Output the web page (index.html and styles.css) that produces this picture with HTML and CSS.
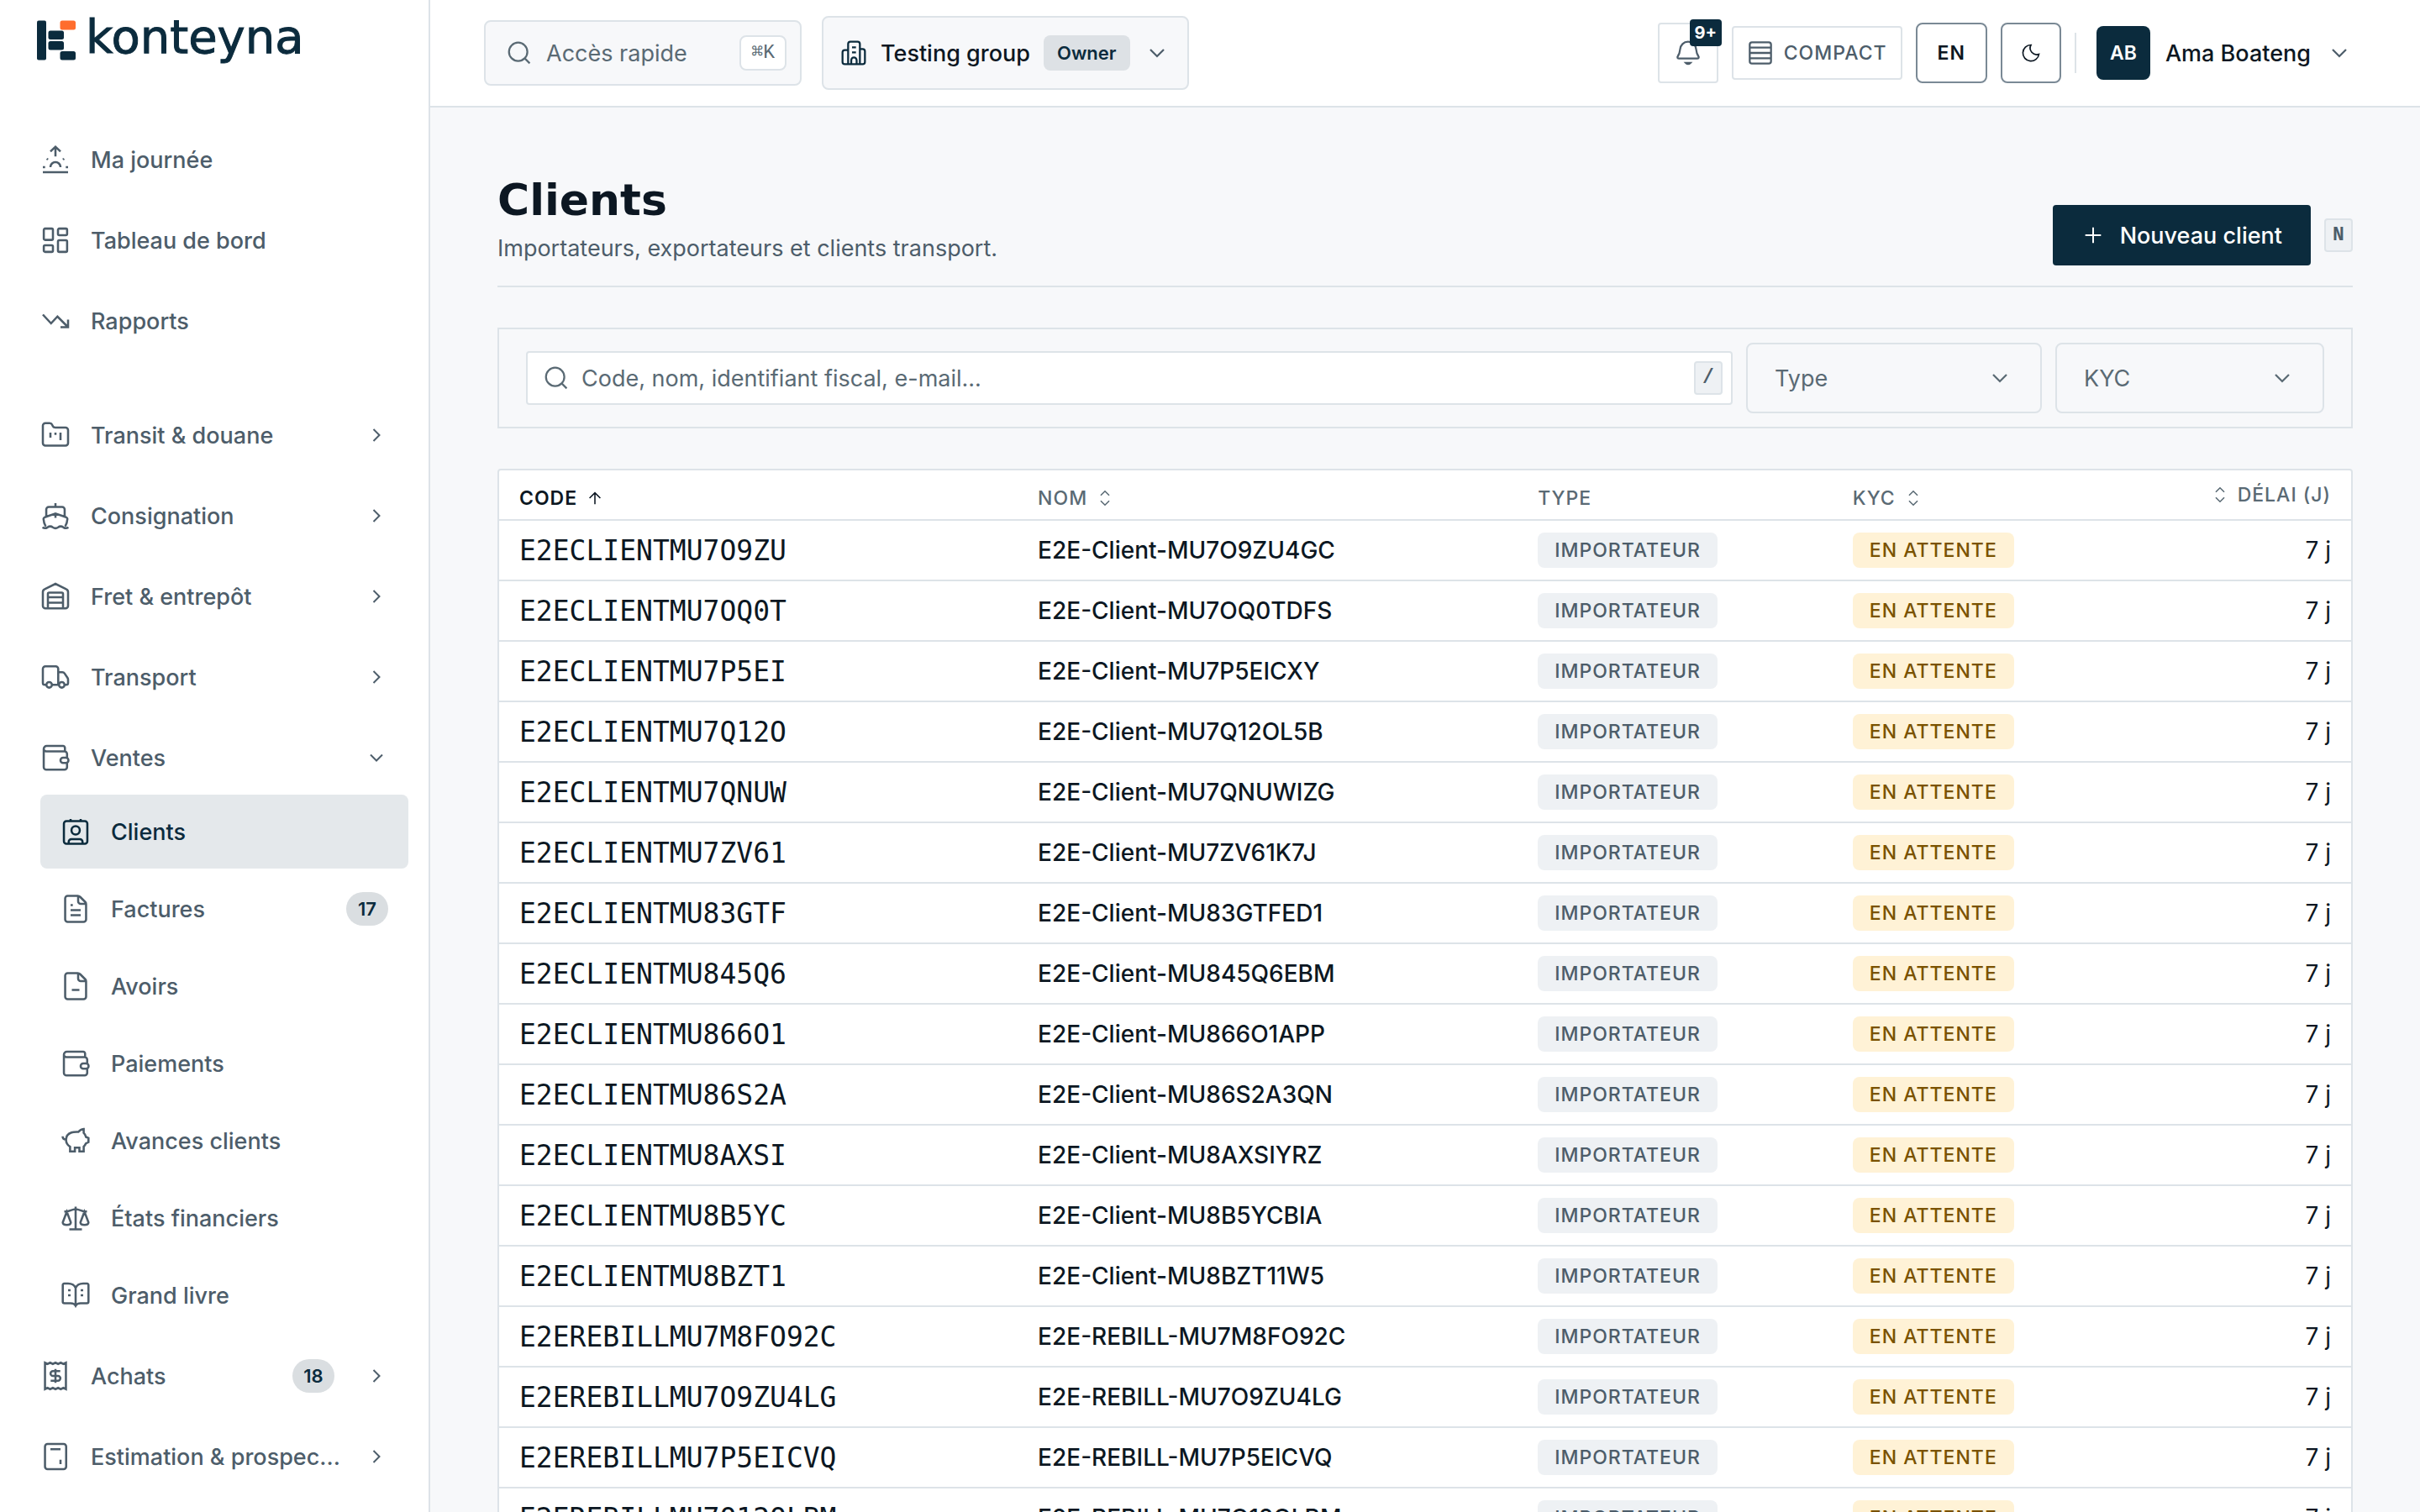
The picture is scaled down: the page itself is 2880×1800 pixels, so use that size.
FILE: index.html
```html
<!DOCTYPE html>
<html lang="fr">

<head>
    <meta charset="UTF-8">
    <meta name="viewport" content="width=device-width, initial-scale=1.0">
    <title>Clients - konteyna</title>
    <link rel="stylesheet" href="styles.css">
</head>

<body>
    <!-- icon sprite -->
    <svg class="sprite" aria-hidden="true">
        <symbol id="i-sunrise" viewBox="0 0 24 24"><path d="M12 9.5V2M8 5.6L12 1.8l4 3.8M8 18a4 4 0 0 1 8 0M2 22h20M2 18h1.8M20.2 18H22M5.2 11.2l.8.8M18.8 11.2l-.8.8"/></symbol>
        <symbol id="i-dashboard" viewBox="0 0 24 24"><rect x="2.75" y="2.75" width="7.25" height="9" rx="1"/><rect x="14" y="2.75" width="7.25" height="5.25" rx="1"/><rect x="2.75" y="16" width="7.25" height="5.25" rx="1"/><rect x="14" y="12" width="7.25" height="9.25" rx="1"/></symbol>
        <symbol id="i-trend" viewBox="0 0 24 24"><path d="M2 7l6.5 7 5.1-5.5L22 17M22 11v6h-6"/></symbol>
        <symbol id="i-folder" viewBox="0 0 24 24"><path d="M2 4.5a2 2 0 0 1 2-2h3.4c1 0 1.6.4 2 1.3l.5 1c.4.8 1 1.2 2 1.2H20a2 2 0 0 1 2 2v10.3a2 2 0 0 1-2 2H4a2 2 0 0 1-2-2zM8 10v4M12 10v1.8M16 10v6"/></symbol>
        <symbol id="i-ship" viewBox="0 0 24 24"><path d="M12 2v3M4.7 12V7a2 2 0 0 1 2-2h10.6a2 2 0 0 1 2 2v5M12 10.2v3.5M4.3 20.5c-1.1-2-1.7-4-1.8-6 0-.7.3-1 1-1.3L12 10.2l8.5 3c.7.3 1 .6 1 1.3-.1 2-.7 4-1.8 6M1.7 21.2c1.2.8 2.7.8 4 0 1.3-.9 3-.9 4.2 0 1.3.9 2.9.9 4.2 0 1.2-.9 2.9-.9 4.2 0 1.3.8 2.8.8 4 0"/></symbol>
        <symbol id="i-warehouse" viewBox="0 0 24 24"><path d="M2 8.5c0-1.2.4-1.8 1.5-2.3L12 2l8.5 4.2c1.1.5 1.5 1.1 1.5 2.3v11a2 2 0 0 1-2 2H4a2 2 0 0 1-2-2zM6 21.5V10a1 1 0 0 1 1-1h10a1 1 0 0 1 1 1v11.5M6 12.7h12M6 17h12"/></symbol>
        <symbol id="i-truck" viewBox="0 0 24 24"><path d="M4.8 18.2H3.5A1.5 1.5 0 0 1 2 16.7V5.5a2 2 0 0 1 2-2h8.2a2 2 0 0 1 2 2v12.7M9.2 18.2h5.6M14.2 8.2h3.3c.8 0 1.3.3 1.7.9l2.3 3.4c.3.5.5.9.5 1.5v2.7a1.5 1.5 0 0 1-1.5 1.5h-1.3"/><circle cx="7" cy="18.2" r="2.2"/><circle cx="17" cy="18.2" r="2.2"/></symbol>
        <symbol id="i-wallet" viewBox="0 0 24 24"><path d="M2.7 5v14.5a2 2 0 0 0 2 2h14.5a2 2 0 0 0 2-2V16.2M21.2 12V9a2 2 0 0 0-2-2H4.7a2 2 0 0 1-2-2 2.3 2.3 0 0 1 2.3-2.3h13a1.5 1.5 0 0 1 1.5 1.5V7"/><rect x="16" y="12" width="6.3" height="4.2" rx="2"/></symbol>
        <symbol id="i-contact" viewBox="0 0 24 24"><rect x="2.7" y="3.7" width="18.6" height="18" rx="2"/><path d="M8 2v1.7M16 2v1.7M6.5 21.5v-1.3a2.2 2.2 0 0 1 2.2-2.2h6.6a2.2 2.2 0 0 1 2.2 2.2v1.3"/><circle cx="12" cy="11" r="3.3"/></symbol>
        <symbol id="i-file" viewBox="0 0 24 24"><path d="M3.7 3.7a2 2 0 0 1 2-2h8c.8 0 1.3.2 1.9.8l4 4c.5.5.7 1 .7 1.8v12a2 2 0 0 1-2 2H5.7a2 2 0 0 1-2-2zM14 2v4a2 2 0 0 0 2 2h4.3M8 9h1.8M8 13h8M8 17h8"/></symbol>
        <symbol id="i-file-minus" viewBox="0 0 24 24"><path d="M3.7 3.7a2 2 0 0 1 2-2h8c.8 0 1.3.2 1.9.8l4 4c.5.5.7 1 .7 1.8v12a2 2 0 0 1-2 2H5.7a2 2 0 0 1-2-2zM14 2v4a2 2 0 0 0 2 2h4.3M9 15h6"/></symbol>
        <symbol id="i-pig" viewBox="0 0 24 24"><path d="M1.7 8.5c0 1.5.8 2.5 2.7 2.7M8.7 5.5C10 5 12 4.9 14.2 5c1-1.3 2.4-2.1 4.2-2.3v3.1c.8.8 1.4 1.9 1.8 3.2l2 .9v3.3l-2 .9c-.5 1-1 1.9-1.8 2.6v3.8H15V17.5h-3.6v3H7.6v-3.7C5.5 15.5 4.4 13.3 4.4 11.2c0-2.5 1.8-4.8 4.3-5.7z"/></symbol>
        <symbol id="i-scale" viewBox="0 0 24 24"><path d="M12 3v18M7 21h10M3 6.8h2c2.5 0 4-1.8 7-1.8s4.5 1.8 7 1.8h2M5 7l-3.2 8.5c0 1.3 1.4 2 3.2 2s3.2-.7 3.2-2zM19 7l-3.2 8.5c0 1.3 1.4 2 3.2 2s3.2-.7 3.2-2z"/></symbol>
        <symbol id="i-book" viewBox="0 0 24 24"><path d="M12 6.2C11 3.8 8.7 2.7 6 2.7H3A1.2 1.2 0 0 0 1.8 4v13a1.3 1.3 0 0 0 1.3 1.3h5c2 0 3.2.6 3.9 2 .7-1.4 1.9-2 3.9-2h5a1.3 1.3 0 0 0 1.3-1.3V4A1.2 1.2 0 0 0 21 2.7h-3c-2.7 0-5 1.1-6 3.5zM12 6.2v14.3M6 8h2M6 12h2M16 8h2M16 12h2"/></symbol>
        <symbol id="i-receipt" viewBox="0 0 24 24"><path d="M3.7 1.5v21l2-1 2.1 1 2.1-1 2.1 1 2.1-1 2.1 1 2.1-1 2 1v-21l-2 1-2.1-1-2.1 1-2.1-1-2.1 1-2.1-1-2.1 1zM15.8 8.2H10a1.9 1.9 0 0 0 0 3.8h4a1.9 1.9 0 0 1 0 3.8H8.2M12 6.5v11"/></symbol>
        <symbol id="i-calculator" viewBox="0 0 24 24"><rect x="3.7" y="2" width="16.8" height="20" rx="2"/><path d="M8 6.2h8M16 14.5v3.5"/></symbol>
        <symbol id="i-right" viewBox="0 0 24 24"><path d="M9 6l6 6-6 6"/></symbol>
        <symbol id="i-down" viewBox="0 0 24 24"><path d="M6 9l6 6 6-6"/></symbol>
        <symbol id="i-search" viewBox="0 0 24 24"><circle cx="11" cy="11" r="8.2"/><path d="M17 17l4.3 4.3"/></symbol>
        <symbol id="i-building" viewBox="0 0 24 24"><path d="M7 22V4a2 2 0 0 1 2-2h6.5a2 2 0 0 1 2 2v18M7 9.5H4a2 2 0 0 0-2 2V20a2 2 0 0 0 2 2h16a2 2 0 0 0 2-2v-9.5a2 2 0 0 0-2-2h-2.500M10.500 7H14M10.500 11.500H14M9.800 22v-3.500a2.400 2.400 0 0 1 4.800 0V22"/></symbol>
        <symbol id="i-bell" viewBox="0 0 24 24"><path d="M4 17c-1.400 0-1.900-1-1.200-2C4 13.200 4.600 11.500 4.800 9 5.100 5 8 2 12 2s6.900 3 7.200 7c.2 2.500.8 4.200 2 6 .7 1 .2 2-1.200 2zM10 21c1.200 1.200 2.800 1.200 4 0z"/></symbol>
        <symbol id="i-rows" viewBox="0 0 24 24"><rect x="2.500" y="2.500" width="19" height="19" rx="2"/><path d="M2.500 7.200h19M2.500 12h19M2.500 16.800h19"/></symbol>
        <symbol id="i-moon" viewBox="0 0 24 24"><path d="M21.500 13.500A7.800 7.800 0 0 1 12 2.500 9.600 9.600 0 1 0 21.500 13.500z"/></symbol>
        <symbol id="i-plus" viewBox="0 0 24 24"><path d="M12 4v16M4 12h16"/></symbol>
        <symbol id="i-arrow-up" viewBox="0 0 24 24"><path d="M12 20V5M5 12l7-7 7 7"/></symbol>
        <symbol id="i-sort" viewBox="0 0 24 24"><path d="M6.500 8.500L12 3l5.500 5.500M6.500 15.500L12 21l5.500-5.500"/></symbol>
    </svg>

    <div class="app">
        <aside class="sidebar">
            <a class="logo" href="#">
                <svg class="logo-mark" viewBox="0 0 46 48" aria-hidden="true">
                    <rect x="0" y="0.500" width="11" height="47" rx="2" fill="#0b2b3d"/>
                    <rect x="27.500" y="0.500" width="18.500" height="11" rx="2.500" fill="#ff6d2d"/>
                    <rect x="13.500" y="12.500" width="18.500" height="10.500" rx="2.500" fill="#0b2b3d"/>
                    <rect x="13.500" y="25" width="18.500" height="10.500" rx="2.500" fill="#0b2b3d"/>
                    <rect x="27.500" y="37" width="18.500" height="10.500" rx="2.500" fill="#0b2b3d"/>
                </svg>
                <span class="logo-text">konteyna</span>
            </a>

            <nav class="nav">
                <a class="nav-item" href="#"><svg class="icon"><use href="#i-sunrise"/></svg><span class="nav-label">Ma journée</span></a>
                <a class="nav-item" href="#"><svg class="icon"><use href="#i-dashboard"/></svg><span class="nav-label">Tableau de bord</span></a>
                <a class="nav-item" href="#"><svg class="icon"><use href="#i-trend"/></svg><span class="nav-label">Rapports</span></a>

                <div class="nav-group">
                    <button type="button" class="nav-item"><svg class="icon"><use href="#i-folder"/></svg><span class="nav-label">Transit &amp; douane</span><svg class="icon chevron"><use href="#i-right"/></svg></button>
                    <button type="button" class="nav-item"><svg class="icon"><use href="#i-ship"/></svg><span class="nav-label">Consignation</span><svg class="icon chevron"><use href="#i-right"/></svg></button>
                    <button type="button" class="nav-item"><svg class="icon"><use href="#i-warehouse"/></svg><span class="nav-label">Fret &amp; entrepôt</span><svg class="icon chevron"><use href="#i-right"/></svg></button>
                    <button type="button" class="nav-item"><svg class="icon"><use href="#i-truck"/></svg><span class="nav-label">Transport</span><svg class="icon chevron"><use href="#i-right"/></svg></button>
                    <div>
                        <button type="button" class="nav-item" aria-expanded="true"><svg class="icon"><use href="#i-wallet"/></svg><span class="nav-label">Ventes</span><svg class="icon chevron"><use href="#i-down"/></svg></button>
                        <div class="subnav">
                            <a class="nav-item active" href="#"><svg class="icon"><use href="#i-contact"/></svg><span class="nav-label">Clients</span></a>
                            <a class="nav-item" href="#"><svg class="icon"><use href="#i-file"/></svg><span class="nav-label">Factures</span><span class="count">17</span></a>
                            <a class="nav-item" href="#"><svg class="icon"><use href="#i-file-minus"/></svg><span class="nav-label">Avoirs</span></a>
                            <a class="nav-item" href="#"><svg class="icon"><use href="#i-wallet"/></svg><span class="nav-label">Paiements</span></a>
                            <a class="nav-item" href="#"><svg class="icon"><use href="#i-pig"/></svg><span class="nav-label">Avances clients</span></a>
                            <a class="nav-item" href="#"><svg class="icon"><use href="#i-scale"/></svg><span class="nav-label">États financiers</span></a>
                            <a class="nav-item" href="#"><svg class="icon"><use href="#i-book"/></svg><span class="nav-label">Grand livre</span></a>
                        </div>
                    </div>
                    <button type="button" class="nav-item"><svg class="icon"><use href="#i-receipt"/></svg><span class="nav-label">Achats</span><span class="count">18</span><svg class="icon chevron"><use href="#i-right"/></svg></button>
                    <button type="button" class="nav-item"><svg class="icon"><use href="#i-calculator"/></svg><span class="nav-label">Estimation &amp; prospec...</span><svg class="icon chevron"><use href="#i-right"/></svg></button>
                </div>
            </nav>
        </aside>

        <div class="page">
            <header class="topbar">
                <button type="button" class="quick">
                    <svg class="icon"><use href="#i-search"/></svg>
                    <span class="quick-label">Accès rapide</span>
                    <kbd class="quick-kbd">⌘K</kbd>
                </button>
                <button type="button" class="group">
                    <svg class="icon"><use href="#i-building"/></svg>
                    <span>Testing group</span>
                    <span class="role">Owner</span>
                    <svg class="icon"><use href="#i-down"/></svg>
                </button>

                <div class="tools">
                    <button type="button" class="tool bell" aria-label="Notifications">
                        <svg class="icon"><use href="#i-bell"/></svg>
                        <span class="bell-count">9+</span>
                    </button>
                    <button type="button" class="tool compact"><svg class="icon"><use href="#i-rows"/></svg>COMPACT</button>
                    <button type="button" class="tool lang">EN</button>
                    <button type="button" class="tool theme" aria-label="Thème"><svg class="icon"><use href="#i-moon"/></svg></button>
                    <span class="divider"></span>
                    <button type="button" class="user">
                        <span class="avatar">AB</span>
                        <span>Ama Boateng</span>
                        <svg class="icon"><use href="#i-down"/></svg>
                    </button>
                </div>
            </header>

            <main class="content">
                <div class="page-head">
                    <div>
                        <h1>Clients</h1>
                        <p>Importateurs, exportateurs et clients transport.</p>
                    </div>
                    <div class="actions">
                        <button type="button" class="primary"><svg class="icon"><use href="#i-plus"/></svg>Nouveau client</button>
                        <kbd class="key">N</kbd>
                    </div>
                </div>

                <form class="filters">
                    <div class="search">
                        <svg class="icon"><use href="#i-search"/></svg>
                        <input type="text" aria-label="Rechercher" placeholder="Code, nom, identifiant fiscal, e-mail...">
                        <kbd class="key">/</kbd>
                    </div>
                    <div class="select type">
                        <select aria-label="Type"><option>Type</option></select>
                        <svg class="icon"><use href="#i-down"/></svg>
                    </div>
                    <div class="select kyc">
                        <select aria-label="KYC"><option>KYC</option></select>
                        <svg class="icon"><use href="#i-down"/></svg>
                    </div>
                </form>

                <div class="table-box">
                    <table>
                        <thead>
                            <tr>
                                <th class="col-code"><button type="button" class="sort sorted">CODE<svg class="icon"><use href="#i-arrow-up"/></svg></button></th>
                                <th class="col-name"><button type="button" class="sort">NOM<svg class="icon"><use href="#i-sort"/></svg></button></th>
                                <th class="col-type"><span class="sort">TYPE</span></th>
                                <th class="col-kyc"><button type="button" class="sort">KYC<svg class="icon"><use href="#i-sort"/></svg></button></th>
                                <th class="col-delay"><button type="button" class="sort"><svg class="icon"><use href="#i-sort"/></svg>DÉLAI (J)</button></th>
                            </tr>
                        </thead>
                        <tbody>
                            <tr><td class="code">E2ECLIENTMU7O9ZU</td><td>E2E-Client-MU7O9ZU4GC</td><td><span class="tag">IMPORTATEUR</span></td><td><span class="tag pending">EN ATTENTE</span></td><td class="delay">7 j</td></tr>
                            <tr><td class="code">E2ECLIENTMU7OQ0T</td><td>E2E-Client-MU7OQ0TDFS</td><td><span class="tag">IMPORTATEUR</span></td><td><span class="tag pending">EN ATTENTE</span></td><td class="delay">7 j</td></tr>
                            <tr><td class="code">E2ECLIENTMU7P5EI</td><td>E2E-Client-MU7P5EICXY</td><td><span class="tag">IMPORTATEUR</span></td><td><span class="tag pending">EN ATTENTE</span></td><td class="delay">7 j</td></tr>
                            <tr><td class="code">E2ECLIENTMU7Q12O</td><td>E2E-Client-MU7Q12OL5B</td><td><span class="tag">IMPORTATEUR</span></td><td><span class="tag pending">EN ATTENTE</span></td><td class="delay">7 j</td></tr>
                            <tr><td class="code">E2ECLIENTMU7QNUW</td><td>E2E-Client-MU7QNUWIZG</td><td><span class="tag">IMPORTATEUR</span></td><td><span class="tag pending">EN ATTENTE</span></td><td class="delay">7 j</td></tr>
                            <tr><td class="code">E2ECLIENTMU7ZV61</td><td>E2E-Client-MU7ZV61K7J</td><td><span class="tag">IMPORTATEUR</span></td><td><span class="tag pending">EN ATTENTE</span></td><td class="delay">7 j</td></tr>
                            <tr><td class="code">E2ECLIENTMU83GTF</td><td>E2E-Client-MU83GTFED1</td><td><span class="tag">IMPORTATEUR</span></td><td><span class="tag pending">EN ATTENTE</span></td><td class="delay">7 j</td></tr>
                            <tr><td class="code">E2ECLIENTMU845Q6</td><td>E2E-Client-MU845Q6EBM</td><td><span class="tag">IMPORTATEUR</span></td><td><span class="tag pending">EN ATTENTE</span></td><td class="delay">7 j</td></tr>
                            <tr><td class="code">E2ECLIENTMU866O1</td><td>E2E-Client-MU866O1APP</td><td><span class="tag">IMPORTATEUR</span></td><td><span class="tag pending">EN ATTENTE</span></td><td class="delay">7 j</td></tr>
                            <tr><td class="code">E2ECLIENTMU86S2A</td><td>E2E-Client-MU86S2A3QN</td><td><span class="tag">IMPORTATEUR</span></td><td><span class="tag pending">EN ATTENTE</span></td><td class="delay">7 j</td></tr>
                            <tr><td class="code">E2ECLIENTMU8AXSI</td><td>E2E-Client-MU8AXSIYRZ</td><td><span class="tag">IMPORTATEUR</span></td><td><span class="tag pending">EN ATTENTE</span></td><td class="delay">7 j</td></tr>
                            <tr><td class="code">E2ECLIENTMU8B5YC</td><td>E2E-Client-MU8B5YCBIA</td><td><span class="tag">IMPORTATEUR</span></td><td><span class="tag pending">EN ATTENTE</span></td><td class="delay">7 j</td></tr>
                            <tr><td class="code">E2ECLIENTMU8BZT1</td><td>E2E-Client-MU8BZT11W5</td><td><span class="tag">IMPORTATEUR</span></td><td><span class="tag pending">EN ATTENTE</span></td><td class="delay">7 j</td></tr>
                            <tr><td class="code">E2EREBILLMU7M8FO92C</td><td>E2E-REBILL-MU7M8FO92C</td><td><span class="tag">IMPORTATEUR</span></td><td><span class="tag pending">EN ATTENTE</span></td><td class="delay">7 j</td></tr>
                            <tr><td class="code">E2EREBILLMU7O9ZU4LG</td><td>E2E-REBILL-MU7O9ZU4LG</td><td><span class="tag">IMPORTATEUR</span></td><td><span class="tag pending">EN ATTENTE</span></td><td class="delay">7 j</td></tr>
                            <tr><td class="code">E2EREBILLMU7P5EICVQ</td><td>E2E-REBILL-MU7P5EICVQ</td><td><span class="tag">IMPORTATEUR</span></td><td><span class="tag pending">EN ATTENTE</span></td><td class="delay">7 j</td></tr>
                            <tr><td class="code">E2EREBILLMU7Q12OLBM</td><td>E2E-REBILL-MU7Q12OLBM</td><td><span class="tag">IMPORTATEUR</span></td><td><span class="tag pending">EN ATTENTE</span></td><td class="delay">7 j</td></tr>
                        </tbody>
                    </table>
                </div>
            </main>
        </div>
    </div>
</body>

</html>
```
FILE: styles.css
```css
* {
    margin: 0;
    padding: 0;
    box-sizing: border-box;
}

body {
    font-family: Inter, "Liberation Sans", sans-serif;
    font-size: 27px;
    color: #0c1722;
    background-color: #f7f8fa;
}

button,
input,
select {
    font: inherit;
    color: inherit;
    background: none;
    border: none;
}

a {
    color: inherit;
    text-decoration: none;
}

.sprite {
    display: none;
}

.icon {
    width: 32px;
    height: 32px;
    flex: none;
    fill: none;
    stroke: currentColor;
    stroke-width: 1.7;
}

.app {
    display: flex;
    height: 100vh;
    overflow: hidden;
}

/* sidebar */
.sidebar {
    width: 512px;
    flex: none;
    background-color: #fff;
    border-right: 2px solid #dde3e8;
    overflow: hidden;
}

.logo {
    display: flex;
    align-items: center;
    gap: 12px;
    height: 96px;
    padding-left: 44px;
}

.logo-mark {
    width: 46px;
    height: 48px;
}

.logo-text {
    font-family: "DejaVu Sans", sans-serif;
    font-size: 56px;
    line-height: 60px;
    padding-bottom: 8px;
    color: #0b2b3d;
    -webkit-text-stroke: 1px #0b2b3d;
}

.nav {
    display: flex;
    flex-direction: column;
    gap: 8px;
    padding: 50px 24px 0 24px;
}

.nav-group {
    display: flex;
    flex-direction: column;
    gap: 8px;
    margin-top: 40px;
}

.nav-item {
    display: flex;
    align-items: center;
    gap: 24px;
    width: 100%;
    height: 88px;
    padding: 0 24px;
    font-weight: 500;
    color: #4d5d6a;
    text-align: left;
    border-radius: 8px;
}

.nav-item .icon {
    width: 36px;
    height: 36px;
}

.nav-item .chevron {
    width: 28px;
    height: 28px;
}

.nav-label {
    flex: 1;
    white-space: nowrap;
}

.subnav {
    display: flex;
    flex-direction: column;
    gap: 4px;
    padding-left: 24px;
}

.nav-item.active {
    color: #0b2b3d;
    background-color: #e4e8eb;
}

.count {
    min-width: 50px;
    padding: 0 12px;
    font-size: 22px;
    font-weight: 600;
    line-height: 40px;
    text-align: center;
    color: #0b2b3d;
    background-color: #dadee1;
    border-radius: 20px;
}

.count + .chevron {
    margin-left: 12px;
}

/* topbar */
.page {
    flex: 1;
    min-width: 0;
}

.topbar {
    display: flex;
    align-items: center;
    gap: 24px;
    height: 128px;
    padding: 0 80px 0 64px;
    background-color: #fff;
    border-bottom: 2px solid #dde3e8;
}

.quick {
    display: flex;
    align-items: center;
    gap: 16px;
    width: 378px;
    height: 78px;
    padding: 0 16px 0 24px;
    color: #5a6a74;
    background-color: #f7f8fa;
    border: 2px solid #dde3e8;
    border-radius: 8px;
}

.quick-label {
    flex: 1;
    text-align: left;
}

kbd {
    font-family: "Liberation Mono", monospace;
}

.quick-kbd {
    padding: 0 12px;
    font-size: 23px;
    line-height: 38px;
    background-color: #fff;
    border: 2px solid #dde3e8;
    border-radius: 8px;
}

.group {
    display: flex;
    align-items: center;
    gap: 16px;
    height: 88px;
    padding: 0 20px;
    font-weight: 500;
    background-color: #f7f8fa;
    border: 2px solid #dde3e8;
    border-radius: 8px;
}

.role {
    padding: 0 16px;
    font-size: 22px;
    font-weight: 600;
    line-height: 42px;
    color: #0b2b3d;
    background-color: #dde1e5;
    border-radius: 8px;
}

.group .icon:first-child {
    color: #0b2b3d;
}

.group .icon:last-child,
.user .icon {
    color: #4d5d6a;
}

.tools {
    display: flex;
    align-items: center;
    gap: 16px;
    margin-left: auto;
}

.tool {
    display: flex;
    align-items: center;
    justify-content: center;
    height: 72px;
    border: 2px solid #7a8995;
    border-radius: 8px;
}

.bell,
.theme {
    width: 72px;
}

.bell,
.compact {
    color: #4d5d6a;
    border-color: #dde3e8;
    border-radius: 4px;
}

.bell {
    position: relative;
}

.bell-count {
    position: absolute;
    top: -6px;
    right: -6px;
    min-width: 38px;
    font-size: 20px;
    font-weight: 700;
    line-height: 32px;
    color: #fff;
    background-color: #0b2b3d;
    border-radius: 4px;
}

.compact {
    gap: 12px;
    height: 64px;
    padding: 0 16px;
    font-size: 23px;
    font-weight: 500;
    letter-spacing: 1px;
}

.lang {
    padding: 0 24px;
    font-size: 23px;
    font-weight: 600;
    letter-spacing: 1px;
}

.theme .icon {
    width: 24px;
    height: 24px;
}

.divider {
    width: 2px;
    height: 48px;
    background-color: #dde3e8;
}

.user {
    display: flex;
    align-items: center;
    gap: 18px;
    padding-left: 8px;
    font-weight: 500;
}

.avatar {
    width: 64px;
    font-size: 23px;
    font-weight: 600;
    line-height: 64px;
    color: #fff;
    background-color: #0b2b3d;
    border-radius: 8px;
}

/* content */
.content {
    padding: 80px;
}

.page-head {
    display: flex;
    justify-content: space-between;
    align-items: flex-end;
    padding-bottom: 24px;
    border-bottom: 2px solid #dde3e8;
}

h1 {
    font-family: "DejaVu Sans", sans-serif;
    font-size: 52px;
    font-weight: 700;
    line-height: 60px;
}

.page-head p {
    margin-top: 8px;
    line-height: 40px;
    color: #4d5d6a;
}

.actions {
    display: flex;
    align-items: center;
    gap: 16px;
}

.primary {
    display: flex;
    align-items: center;
    gap: 18px;
    height: 72px;
    padding: 0 34px;
    font-weight: 500;
    color: #fff;
    background-color: #0b2b3d;
    border-radius: 4px;
}

.primary .icon {
    width: 28px;
    height: 28px;
}

.key {
    min-width: 34px;
    font-size: 23px;
    font-weight: 700;
    line-height: 36px;
    text-align: center;
    color: #4d5d6a;
    background-color: #eef1f4;
    border: 2px solid #dde3e8;
    border-radius: 4px;
}

.filters {
    display: flex;
    align-items: center;
    gap: 16px;
    margin: 48px 0;
    padding: 16px 32px;
    border: 2px solid #dde3e8;
}

.search {
    display: flex;
    flex: 1;
    align-items: center;
    gap: 14px;
    height: 64px;
    padding: 0 10px 0 18px;
    color: #5a6a74;
    background-color: #fff;
    border: 2px solid #dde3e8;
    border-radius: 4px;
}

.search input {
    flex: 1;
    outline: none;
}

.search input::placeholder {
    color: #5a6a74;
    opacity: 1;
}

.select {
    display: grid;
    align-items: center;
    color: #5a6a74;
}

.select select {
    grid-area: 1 / 1;
    height: 84px;
    padding: 0 32px;
    border: 2px solid #dde3e8;
    border-radius: 8px;
    appearance: none;
}

.select .icon {
    grid-area: 1 / 1;
    justify-self: end;
    margin-right: 34px;
    pointer-events: none;
}

.type {
    width: 352px;
}

.kyc {
    width: 320px;
}

/* table */
.table-box {
    background-color: #fff;
    border: 2px solid #dde3e8;
    border-radius: 4px;
}

table {
    width: 100%;
    table-layout: fixed;
    border-collapse: separate;
    border-spacing: 0;
}

th,
td {
    padding: 0 24px;
    text-align: left;
    border-bottom: 2px solid #dde3e8;
}

th {
    height: 60px;
    padding-top: 4px;
}

td {
    height: 72px;
    font-size: 28px;
    font-weight: 500;
}

.col-code {
    width: 28%;
}

.col-name {
    width: 27%;
}

.col-type {
    width: 17%;
}

.col-kyc {
    width: 14%;
}

.col-delay {
    padding-top: 0;
    padding-bottom: 4px;
    text-align: right;
}

.sort {
    display: inline-flex;
    align-items: center;
    gap: 10px;
    font-size: 23px;
    font-weight: 500;
    letter-spacing: 1px;
    vertical-align: middle;
    color: #5a6a74;
}

.sort .icon {
    width: 22px;
    height: 22px;
}

.sort.sorted {
    font-weight: 600;
    color: #0c1722;
}

.code {
    font-family: "DejaVu Sans Mono", monospace;
    font-size: 33px;
    font-weight: 400;
}

.tag {
    display: inline-block;
    padding: 0 20px;
    font-size: 23px;
    font-weight: 500;
    line-height: 42px;
    letter-spacing: 1px;
    vertical-align: middle;
    color: #4d5d6a;
    background-color: #eef1f4;
    border-radius: 8px;
}

.pending {
    color: #7a5200;
    background-color: #fff2d6;
}

.delay {
    font-weight: 400;
    text-align: right;
}
```
